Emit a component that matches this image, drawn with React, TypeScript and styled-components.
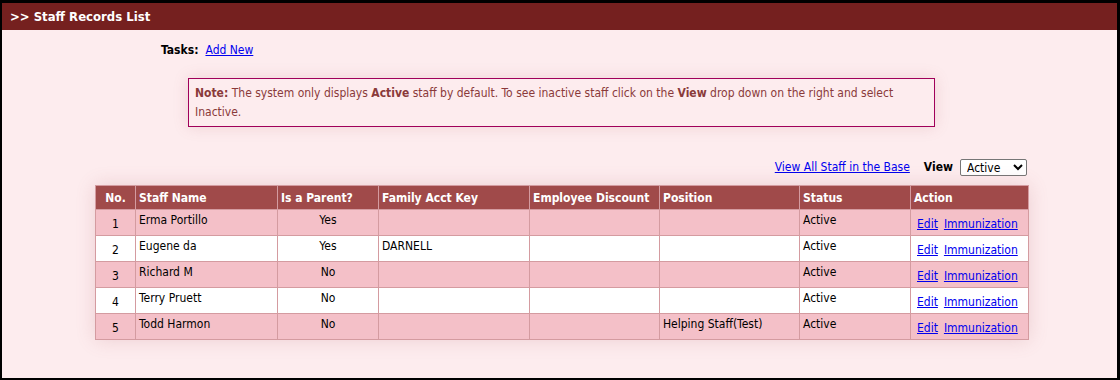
import React from "react";
import styled, { createGlobalStyle } from "styled-components";

const GlobalStyle = createGlobalStyle`
  html, body { margin: 0; padding: 0; background: #000; }
  body { font-family: "DejaVu Sans Condensed", "DejaVu Sans", sans-serif; font-size: 12px; }
  * { box-sizing: border-box; }
`;

const Frame = styled.div`
  width: 1120px;
  height: 380px;
  border-style: solid;
  border-color: #000;
  border-width: 3px 3px 2px 2px;
  background: #fdecee;
  display: flex;
  flex-direction: column;
  overflow: hidden;
`;

const TitleBar = styled.div`
  height: 27px;
  background: #75201f;
  color: #fff;
  font-weight: bold;
  font-size: 13px;
  display: flex;
  align-items: center;
  padding-left: 8px;
`;

const Content = styled.div`
  flex: 1;
  display: flex;
  flex-direction: column;
`;

const TasksRow = styled.div`
  margin-top: 13px;
  padding-left: 159px;
  display: flex;
  gap: 7px;
  align-items: center;
  height: 14px;
  color: #000;
`;

const Bold = styled.b`
  font-weight: bold;
`;

const Link = styled.a`
  color: #0000ee;
  text-decoration: underline;
  cursor: pointer;
`;

const NoteBox = styled.div`
  margin: 21px 0 0 186px;
  width: 747px;
  height: 49px;
  border: 1px solid #a0005a;
  color: #8a3a3a;
  padding: 5px 6px;
  line-height: 19px;
  box-shadow: 0 0 14px rgba(170, 90, 100, 0.18);
`;

const ViewRow = styled.div`
  margin-top: 31px;
  width: 1025px;
  display: flex;
  justify-content: flex-end;
  align-items: center;
  height: 18px;
`;

const ViewLabel = styled.b`
  margin: 0 7px 0 14px;
  color: #000;
`;

const Select = styled.select`
  width: 67px;
  height: 17px;
  font-family: "DejaVu Sans Condensed", sans-serif;
  font-size: 12px;
  border: 1px solid #767676;
  border-radius: 2px;
  background: #fff;
  padding: 0 2px;
`;

const Table = styled.table`
  margin: 9px 0 0 93px;
  width: 933px;
  border-collapse: collapse;
  border: 1px solid #d49ba0;
  box-shadow: 0 0 18px rgba(170, 90, 100, 0.2);
  table-layout: fixed;
`;

const Th = styled.th<{ $w: number; $center?: boolean }>`
  width: ${(p) => p.$w}px;
  height: 24px;
  background: #a04a4a;
  color: #fff;
  font-weight: bold;
  text-align: ${(p) => (p.$center ? "center" : "left")};
  padding: 0 3px;
  border: 1px solid #d49ba0;
  white-space: nowrap;
`;

const Tr = styled.tr<{ $odd: boolean }>`
  background: ${(p) => (p.$odd ? "#f4c0c8" : "#fff")};
  height: 26px;
`;

const Td = styled.td<{ $align?: string; $valign?: string }>`
  border: 1px solid #d49ba0;
  padding: 3px 3px 0;
  text-align: ${(p) => p.$align || "left"};
  vertical-align: ${(p) => p.$valign || "top"};
  color: #000;
  white-space: nowrap;
`;

const ActionCell = styled(Td)`
  padding: 3px 0 0 6px;
`;

const Actions = styled.div`
  display: flex;
  gap: 6px;
`;

type Staff = { name: string; parent: string; key: string; position: string };

const rows: Staff[] = [
  { name: "Erma Portillo", parent: "Yes", key: "", position: "" },
  { name: "Eugene da", parent: "Yes", key: "DARNELL", position: "" },
  { name: "Richard M", parent: "No", key: "", position: "" },
  { name: "Terry Pruett", parent: "No", key: "", position: "" },
  { name: "Todd Harmon", parent: "No", key: "", position: "Helping Staff(Test)" },
];

export default function App() {
  return (
    <>
      <GlobalStyle />
      <Frame>
        <TitleBar>&gt;&gt; Staff Records List</TitleBar>
        <Content>
          <TasksRow>
            <Bold>Tasks:</Bold>
            <Link>Add New</Link>
          </TasksRow>
          <NoteBox>
            <Bold>Note:</Bold> The system only displays <Bold>Active</Bold> staff by default. To see
            inactive staff click on the <Bold>View</Bold> drop down on the right and select Inactive.
          </NoteBox>
          <ViewRow>
            <Link>View All Staff in the Base</Link>
            <ViewLabel>View</ViewLabel>
            <Select defaultValue="Active">
              <option>Active</option>
              <option>Inactive</option>
            </Select>
          </ViewRow>
          <Table>
            <thead>
              <tr>
                <Th $w={40} $center>No.</Th>
                <Th $w={142}>Staff Name</Th>
                <Th $w={101}>Is a Parent?</Th>
                <Th $w={151}>Family Acct Key</Th>
                <Th $w={130}>Employee Discount</Th>
                <Th $w={140}>Position</Th>
                <Th $w={111}>Status</Th>
                <Th $w={118}>Action</Th>
              </tr>
            </thead>
            <tbody>
              {rows.map((r, i) => (
                <Tr key={r.name} $odd={i % 2 === 0}>
                  <Td $align="center" $valign="middle">{i + 1}</Td>
                  <Td>{r.name}</Td>
                  <Td $align="center">{r.parent}</Td>
                  <Td>{r.key}</Td>
                  <Td></Td>
                  <Td>{r.position}</Td>
                  <Td>Active</Td>
                  <ActionCell $valign="middle">
                    <Actions>
                      <Link>Edit</Link>
                      <Link>Immunization</Link>
                    </Actions>
                  </ActionCell>
                </Tr>
              ))}
            </tbody>
          </Table>
        </Content>
      </Frame>
    </>
  );
}
